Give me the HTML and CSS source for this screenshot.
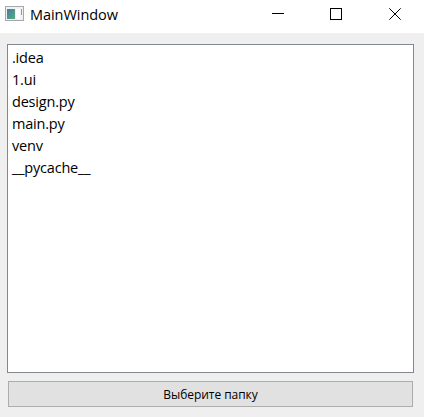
FILE: index.html
```html
<!DOCTYPE html>
<html lang="ru">
<head>
<meta charset="utf-8">
<title>MainWindow</title>
<link rel="stylesheet" href="styles.css">
</head>
<body>
<div class="window">
  <header class="titlebar">
    <svg class="app-icon" width="19" height="15" viewBox="0 0 19 15">
      <defs><linearGradient id="pane" x1="0" y1="0" x2="1" y2="1"><stop offset="0" stop-color="#4779a5"/><stop offset="1" stop-color="#58ad80"/></linearGradient></defs>
      <rect x=".5" y=".5" width="18" height="14" fill="#f0f2f2" stroke="#a5a9ac"/>
      <rect x="2" y="3" width="8" height="10" fill="url(#pane)"/>
      <rect x="11" y="3" width="4" height="10" fill="#fff"/>
      <rect x="16" y="3" width="1" height="6" fill="#70ae8e"/>
    </svg>
    <h1 class="title">MainWindow</h1>
    <svg class="control" width="12" height="12" viewBox="0 0 12 12"><path d="M0 5.5H12"/></svg>
    <svg class="control" width="12" height="12" viewBox="0 0 12 12"><rect x=".5" y=".5" width="11" height="11"/></svg>
    <svg class="control close" width="12" height="12" viewBox="0 0 12 12"><path d="M.3 .3L11.7 11.7M11.7 .3L.3 11.7"/></svg>
  </header>
  <main class="content">
    <ul class="files">
      <li>.idea</li>
      <li>1.ui</li>
      <li>design.py</li>
      <li>main.py</li>
      <li>venv</li>
      <li>__pycache__</li>
    </ul>
    <button class="choose">Выберите папку</button>
  </main>
</div>
</body>
</html>
```
FILE: styles.css
```css
* { box-sizing: border-box; }
body { margin: 0; font-family: "Open Sans", "Noto Sans", sans-serif; color: #000; }
.window { height: 417px; display: flex; flex-direction: column; background: #efefef; overflow: hidden; }
.titlebar { height: 33px; flex: none; display: flex; align-items: flex-start; padding: 6px 23px 0 5px; background: #fff; }
.app-icon { flex: none; }
.title { margin: -2px auto 0 6px; font-size: 14.5px; line-height: 22px; font-weight: 400; letter-spacing: -.05px; }
.control { flex: none; margin: 2px 0 0 46px; fill: none; stroke: #000; stroke-width: 1; }
.close { margin-left: 47px; }
.content { flex: 1; display: flex; flex-direction: column; gap: 8px; padding: 11px 10px 10px 7px; }
.files { flex: 1; margin: 0; padding: 2px 4px; list-style: none; border: 1px solid #828790; background: #fff; font-size: 14.5px; line-height: 22px; letter-spacing: -.2px; }
.choose { height: 26px; margin: 0 1px; padding: 2px 0 0; border: 1px solid #adadad; background: #e1e1e1; font: 12px/22px "Open Sans", "Noto Sans", sans-serif; letter-spacing: -.05px; color: #000; }
```
